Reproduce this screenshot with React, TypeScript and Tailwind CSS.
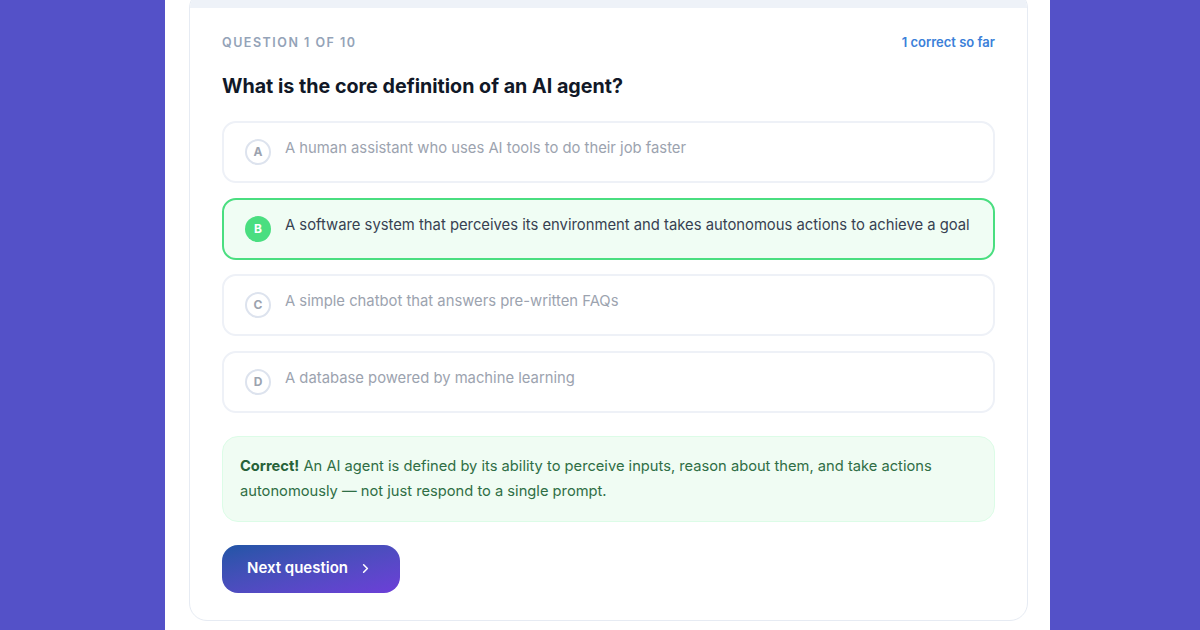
import { ChevronRight } from "lucide-react";

const options = [
  { letter: "A", text: "A human assistant who uses AI tools to do their job faster" },
  {
    letter: "B",
    text: "A software system that perceives its environment and takes autonomous actions to achieve a goal",
    correct: true,
  },
  { letter: "C", text: "A simple chatbot that answers pre-written FAQs" },
  { letter: "D", text: "A database powered by machine learning" },
];

export default function App() {
  return (
    <div className="flex h-[630px] w-[1200px] overflow-hidden bg-[#5451c8] font-['Inter',sans-serif]">
      <div className="w-[165px] shrink-0" />
      <div className="flex w-[885px] shrink-0 flex-col bg-white pl-[24px] pr-[22px]">
        <div className="-mt-[10px] overflow-hidden rounded-[18px] border border-[#e6ebf3] bg-white">
          <div className="h-[17px] bg-[#eef2f8]" />
          <div className="px-8 pb-[27px] pt-[27px]">
            <div className="flex h-4 items-center justify-between">
              <span className="text-[12.5px] font-semibold uppercase tracking-[0.12em] text-[#94a3b8]">
                Question 1 of 10
              </span>
              <span className="text-[13px] font-semibold text-[#3b7fd9]">1 correct so far</span>
            </div>
            <h2 className="mt-[21px] text-[19.7px] leading-7 font-bold text-[#111827]">
              What is the core definition of an AI agent?
            </h2>
            <div className="mt-[21px] flex flex-col gap-[14.5px]">
              {options.map((o) => (
                <div
                  key={o.letter}
                  className={
                    o.correct
                      ? "flex h-[62px] items-start gap-3.5 rounded-[14px] border-2 border-[#4ade80] bg-[#f0fdf4] py-4 pl-[21px] pr-3"
                      : "flex h-[62px] items-start gap-3.5 rounded-[14px] border-2 border-[#eef1f7] bg-white py-4 pl-[21px] pr-3"
                  }
                >
                  <div
                    className={
                      o.correct
                        ? "flex h-[26px] w-[26px] shrink-0 items-center justify-center rounded-full bg-[#4ade80] text-xs font-bold text-white"
                        : "flex h-[26px] w-[26px] shrink-0 items-center justify-center rounded-full border-2 border-[#dde3ee] text-xs font-bold text-[#9ca3af]"
                    }
                  >
                    {o.letter}
                  </div>
                  <p
                    className={
                      o.correct
                        ? "-mt-[2px] whitespace-nowrap text-[14.8px] leading-[22px] text-[#374151]"
                        : "-mt-[2px] whitespace-nowrap text-[14.8px] leading-[22px] text-[#9ca3af]"
                    }
                  >
                    {o.text}
                  </p>
                </div>
              ))}
            </div>
            <div className="mt-[23px] rounded-2xl border border-[#dcfce7] bg-[#f0fcf3] px-[17px] py-[17px] text-[14.7px] leading-[25px] text-[#2f6e45]">
              <span className="font-bold text-[#276239]">Correct!</span> An AI agent is defined by its
              ability to perceive inputs, reason about them, and take actions autonomously — not just
              respond to a single prompt.
            </div>
            <button className="mt-[23px] flex h-12 items-center gap-2.5 rounded-2xl bg-gradient-to-br from-[#1f55a6] to-[#6c3ed8] pl-[25px] pr-[27px] text-[15px] font-semibold text-white">
              Next question
              <ChevronRight size={15} strokeWidth={2.5} />
            </button>
          </div>
        </div>
      </div>
    </div>
  );
}
